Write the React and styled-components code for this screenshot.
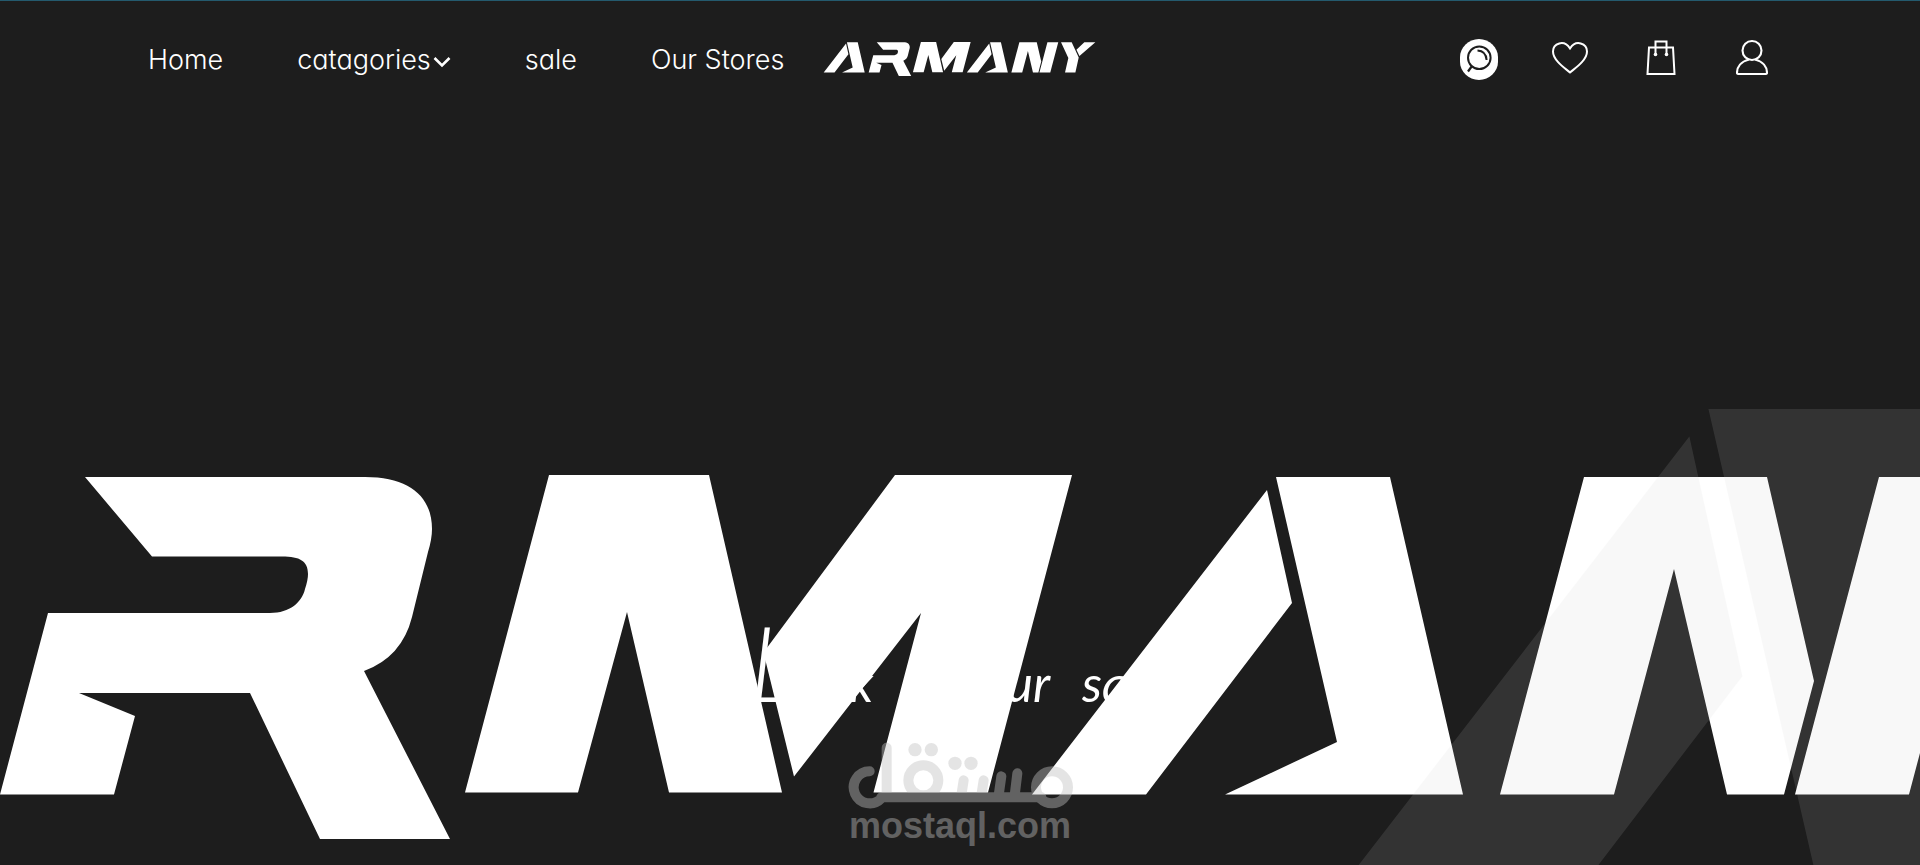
import React from "react";
import styled, { createGlobalStyle } from "styled-components";

const GlobalStyle = createGlobalStyle`
    * {
        box-sizing: border-box;
    }
    body {
        margin: 0;
        background: #1d1d1d;
        color: #fff;
        font-family: Inter, "Liberation Sans", sans-serif;
    }
`;

const StyledPage = styled.div`
    position: relative;
    display: flex;
    flex-direction: column;
    min-height: 100vh;
    overflow: hidden;
    border-top: 1px solid #245a6e;
`;

const StyledHeader = styled.header`
    display: grid;
    grid-template-columns: 1fr auto 1fr;
    align-items: center;
    height: 116px;
    padding: 0 148px;
`;

const StyledNav = styled.nav`
    display: flex;
    align-items: center;
    gap: 74px;
    padding-top: 2px;
    white-space: nowrap;
`;

const NavLink = styled.a`
    display: flex;
    align-items: center;
    color: #fff;
    font-size: 27px;
    line-height: 32px;
    font-weight: 300;
    font-feature-settings: "cv11";
    text-decoration: none;
    svg {
        margin: 4px 0 0 2px;
    }
`;

const LogoLink = styled.a`
    display: block;
    width: 274px;
    color: #fff;
    svg {
        display: block;
        width: 100%;
    }
`;

const StyledActions = styled.div`
    display: flex;
    align-items: center;
    justify-content: flex-end;
    gap: 51px;
`;

const IconButton = styled.button`
    display: flex;
    align-items: flex-start;
    justify-content: center;
    width: 40px;
    height: 41px;
    padding: 0;
    border: 0;
    background: none;
    color: #fff;
    cursor: pointer;
`;

const StyledHero = styled.main`
    display: flex;
    flex: 1;
    flex-direction: column;
    align-items: center;
    padding-top: 358px;
`;

const HeroWordmark = styled.div`
    flex: none;
    width: 150vw;
    svg {
        display: block;
        width: 100%;
    }
`;

const Tagline = styled.p`
    position: absolute;
    top: 601px;
    left: 0;
    right: 0;
    display: flex;
    align-items: baseline;
    justify-content: center;
    gap: 32px;
    margin: 0;
    padding-right: 8px;
    font-family: Lato, sans-serif;
    font-size: 50px;
    line-height: 120px;
    font-style: italic;
`;

const Initial = styled.span`
    font-size: 104px;
    font-weight: 300;
`;

const Backdrop = styled.svg`
    position: absolute;
    top: 408px;
    right: -185px;
    width: 914px;
    opacity: 0.124;
`;

const Watermark = styled.div`
    position: absolute;
    top: 741px;
    left: 0;
    right: 0;
    display: flex;
    flex-direction: column;
    align-items: center;
    color: #c1c1c1;
    font: bold 36px/32px "Liberation Sans", sans-serif;
    opacity: 0.42;
`;

const shapeA =
    "M1267 491 1292 604 1146 795.5H1032ZM1276 478H1390L1463 795.5H1225L1337 743Z";

const Wordmark = () => (
    <svg viewBox="-480 476 2880 364" fill="currentColor" role="img" aria-label="Armany">
        <path d={shapeA} transform="translate(-1505 0)" />
        <path d="M85 478H365C410 478 432 498 432 530Q432 540 428 553L412 618Q402 658 364 672L450 840H320L250 694H79L135 717 114 795.5H0L48 614H270C290 614 302 603 305 590Q308 581 308 575C308 562 300 557.5 282 557.5H152Z" />
        <path d="M549 476H709L782 793.5H669L627 613 578 793.5H465ZM895 476H1072L988 793.5H873.5L921 614 794 777.5 763.5 653.5Z" />
        <path d={shapeA} />
        <path d="M1584 478H1767L1814 682 1784 795.5H1727L1674 570 1614 795.5H1500ZM1879 478H1993L1909 795.5H1795Z" />
        <path d="M2022 478H2134L2172 560 2208 640 2173 795.5H2064L2099 644ZM2267 478H2383L2216 622 2184 558Z" />
    </svg>
);

const ChevronIcon = () => (
    <svg width="18" height="12" viewBox="0 0 18 12" fill="none" stroke="currentColor" strokeWidth="2.6" aria-hidden="true">
        <path d="M1.5 2 9 9.5 16.5 2" />
    </svg>
);

const SearchIcon = () => (
    <svg width="38" height="41" viewBox="0 0 38 41" fill="none" stroke="#1d1d1d" aria-hidden="true">
        <path d="M19 0C29.5 0 38 8.5 38 18V23C38 32.5 29.5 41 19 41S0 32.5 0 23V18C0 8.5 8.5 0 19 0Z" fill="#fff" stroke="none" />
        <circle cx="19.3" cy="18.8" r="11.3" strokeWidth="2" />
        <path d="M17.5 11.5Q26 12 26.6 21" strokeWidth="2" />
        <path d="M12 27 8 32.5" strokeWidth="2.2" />
    </svg>
);

const HeartIcon = () => (
    <svg width="36" height="35" viewBox="0 -3 36 35" fill="none" stroke="currentColor" strokeWidth="2" aria-hidden="true">
        <path d="M18 30.5C12 25.5 1 18 1 9.5 1 1.5 12-3 18 6.5 24-3 35 1.5 35 9.5 35 18 24 25.5 18 30.5Z" />
    </svg>
);

const BagIcon = () => (
    <svg width="30" height="37" viewBox="0 -1 30 37" fill="none" stroke="currentColor" strokeWidth="2" aria-hidden="true">
        <path d="M3 7.5H27L28.5 34H1.5ZM9.5 14V1.5H20.5V14" />
        <circle cx="9.5" cy="14.5" r="1.8" fill="currentColor" stroke="none" />
        <circle cx="20.5" cy="14.5" r="1.8" fill="currentColor" stroke="none" />
    </svg>
);

const UserIcon = () => (
    <svg width="32" height="37" viewBox="0 -1 32 37" fill="none" stroke="currentColor" strokeWidth="2.1" aria-hidden="true">
        <circle cx="16" cy="10.5" r="9.5" />
        <path d="M13 19.5C5 21.5 1 27 1 33Q1 34 2 34H30Q31 34 31 33C31 27 27 21.5 19 19.5" />
    </svg>
);

const WatermarkLogo = () => (
    <svg width="225" height="68" viewBox="80 130 675 204" fill="none" stroke="currentColor" strokeWidth="30" strokeLinecap="round" aria-hidden="true">
        <path d="M145 218A48 48 0 1 0 180 299M180 296H660M196 147V290M427 245 420 290M487 245 480 290M540 233 532 290M588 224 580 290" />
        <circle cx="306" cy="245" r="45" />
        <circle cx="692" cy="266" r="48" />
        <g fill="currentColor" stroke="none">
            <circle cx="281" cy="153" r="20" />
            <circle cx="330" cy="153" r="20" />
            <circle cx="401" cy="194" r="20" />
            <circle cx="449" cy="194" r="20" />
        </g>
    </svg>
);

const App = () => (
    <StyledPage>
        <GlobalStyle />
        <StyledHeader>
            <StyledNav>
                <NavLink href="#home">Home</NavLink>
                <NavLink href="#catagories">
                    catagories
                    <ChevronIcon />
                </NavLink>
                <NavLink href="#sale">sale</NavLink>
                <NavLink href="#stores">Our Stores</NavLink>
            </StyledNav>
            <LogoLink href="#home">
                <Wordmark />
            </LogoLink>
            <StyledActions>
                <IconButton aria-label="Search">
                    <SearchIcon />
                </IconButton>
                <IconButton aria-label="Wishlist">
                    <HeartIcon />
                </IconButton>
                <IconButton aria-label="Bag">
                    <BagIcon />
                </IconButton>
                <IconButton aria-label="Account">
                    <UserIcon />
                </IconButton>
            </StyledActions>
        </StyledHeader>
        <StyledHero>
            <HeroWordmark>
                <Wordmark />
            </HeroWordmark>
            <Tagline>
                <span>
                    <Initial>L</Initial>ook
                </span>
                <span>at</span>
                <span>our</span>
                <span>sale</span>
            </Tagline>
        </StyledHero>
        <Backdrop viewBox="1032 478 431 317.5" fill="#cfcfcf" aria-hidden="true">
            <path d={shapeA} />
        </Backdrop>
        <Watermark>
            <WatermarkLogo />
            mostaql.com
        </Watermark>
    </StyledPage>
);

export default App;
